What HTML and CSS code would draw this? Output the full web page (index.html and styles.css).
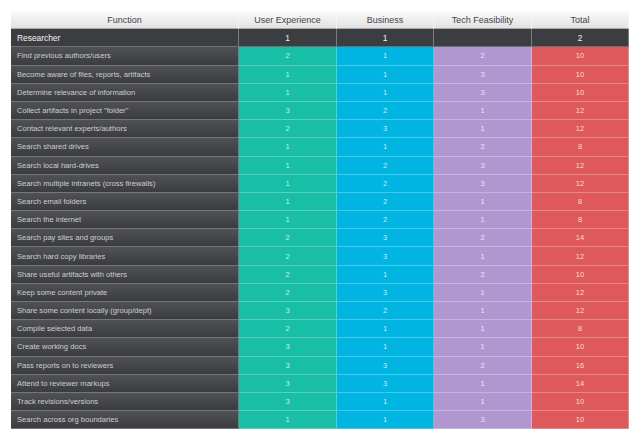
FILE: index.html
```html
<!DOCTYPE html>
<html>
<head>
<meta charset="utf-8">
<link rel="stylesheet" href="styles.css">
</head>
<body>
<div class="matrix">
  <div class="row head">
    <div class="c fn">Function</div><div class="c">User Experience</div><div class="c">Business</div><div class="c">Tech Feasibility</div><div class="c">Total</div>
  </div>
  <div class="row group">
    <div class="c fn">Researcher</div><div class="c">1</div><div class="c">1</div><div class="c"></div><div class="c">2</div>
  </div>
  <div class="row"><div class="c fn">Find previous authors/users</div><div class="c ux">2</div><div class="c bz">1</div><div class="c tf">2</div><div class="c tt">10</div></div>
  <div class="row"><div class="c fn">Become aware of files, reports, artifacts</div><div class="c ux">1</div><div class="c bz">1</div><div class="c tf">3</div><div class="c tt">10</div></div>
  <div class="row"><div class="c fn">Determine relevance of information</div><div class="c ux">1</div><div class="c bz">1</div><div class="c tf">3</div><div class="c tt">10</div></div>
  <div class="row"><div class="c fn">Collect artifacts in project "folder"</div><div class="c ux">3</div><div class="c bz">2</div><div class="c tf">1</div><div class="c tt">12</div></div>
  <div class="row"><div class="c fn">Contact relevant experts/authors</div><div class="c ux">2</div><div class="c bz">3</div><div class="c tf">1</div><div class="c tt">12</div></div>
  <div class="row"><div class="c fn">Search shared drives</div><div class="c ux">1</div><div class="c bz">1</div><div class="c tf">2</div><div class="c tt">8</div></div>
  <div class="row"><div class="c fn">Search local hard-drives</div><div class="c ux">1</div><div class="c bz">2</div><div class="c tf">3</div><div class="c tt">12</div></div>
  <div class="row"><div class="c fn">Search multiple intranets (cross firewalls)</div><div class="c ux">1</div><div class="c bz">2</div><div class="c tf">3</div><div class="c tt">12</div></div>
  <div class="row"><div class="c fn">Search email folders</div><div class="c ux">1</div><div class="c bz">2</div><div class="c tf">1</div><div class="c tt">8</div></div>
  <div class="row"><div class="c fn">Search the internet</div><div class="c ux">1</div><div class="c bz">2</div><div class="c tf">1</div><div class="c tt">8</div></div>
  <div class="row"><div class="c fn">Search pay sites and groups</div><div class="c ux">2</div><div class="c bz">3</div><div class="c tf">2</div><div class="c tt">14</div></div>
  <div class="row"><div class="c fn">Search hard copy libraries</div><div class="c ux">2</div><div class="c bz">3</div><div class="c tf">1</div><div class="c tt">12</div></div>
  <div class="row"><div class="c fn">Share useful artifacts with others</div><div class="c ux">2</div><div class="c bz">1</div><div class="c tf">2</div><div class="c tt">10</div></div>
  <div class="row"><div class="c fn">Keep some content private</div><div class="c ux">2</div><div class="c bz">3</div><div class="c tf">1</div><div class="c tt">12</div></div>
  <div class="row"><div class="c fn">Share some content locally (group/dept)</div><div class="c ux">3</div><div class="c bz">2</div><div class="c tf">1</div><div class="c tt">12</div></div>
  <div class="row"><div class="c fn">Compile selected data</div><div class="c ux">2</div><div class="c bz">1</div><div class="c tf">1</div><div class="c tt">8</div></div>
  <div class="row"><div class="c fn">Create working docs</div><div class="c ux">3</div><div class="c bz">1</div><div class="c tf">1</div><div class="c tt">10</div></div>
  <div class="row"><div class="c fn">Pass reports on to reviewers</div><div class="c ux">3</div><div class="c bz">3</div><div class="c tf">2</div><div class="c tt">16</div></div>
  <div class="row"><div class="c fn">Attend to reviewer markups</div><div class="c ux">3</div><div class="c bz">3</div><div class="c tf">1</div><div class="c tt">14</div></div>
  <div class="row"><div class="c fn">Track revisions/versions</div><div class="c ux">3</div><div class="c bz">1</div><div class="c tf">1</div><div class="c tt">10</div></div>
  <div class="row"><div class="c fn">Search across org boundaries</div><div class="c ux">1</div><div class="c bz">1</div><div class="c tf">3</div><div class="c tt">10</div></div>
</div>
</body>
</html>
```
FILE: styles.css
```css
html, body {
  margin: 0;
  padding: 0;
  background: #ffffff;
}
body {
  font-family: "Liberation Sans", Arial, sans-serif;
}
.matrix {
  margin: 11px 0 0 11px;
  width: 618px;
  display: flex;
  flex-direction: column;
}
.row {
  display: grid;
  grid-template-columns: 228px 98px 97px 98px 97px;
  height: 18.19px;
}
.c {
  box-sizing: border-box;
  display: flex;
  align-items: center;
  justify-content: center;
  font-size: 7.6px;
  color: rgba(255,255,255,0.78);
  border-bottom: 1px solid rgba(255,255,255,0.28);
  border-right: 1px solid rgba(255,255,255,0.28);
  white-space: nowrap;
  overflow: hidden;
}
.c.fn {
  justify-content: flex-start;
  padding-left: 6px;
  color: #cdcdd0;
  background: linear-gradient(#505155, #3b3c40);
  border-bottom: 1px solid #75767a;
  border-right: 1px solid #7c7d80;
}
.head .c {
  justify-content: center;
  padding-left: 0;
  font-size: 9px;
  color: #444444;
  background: linear-gradient(#fbfbfb, #e1e1e1);
  border-bottom: 1px solid #a9a9a9;
  border-right: 1px solid #f4f4f4;
}
.group .c {
  font-size: 8.4px;
  color: #f4f4f4;
  background: #3c3d41;
  border-bottom: 1px solid #6e6f72;
  border-right: 1px solid #7c7d80;
}
.group .c.fn {
  background: #3c3d41;
  color: #f4f4f4;
}
.ux { background: #18bea5; }
.bz { background: #00b5e2; }
.tf { background: #b197cf; }
.tt { background: #de595b; }
```
